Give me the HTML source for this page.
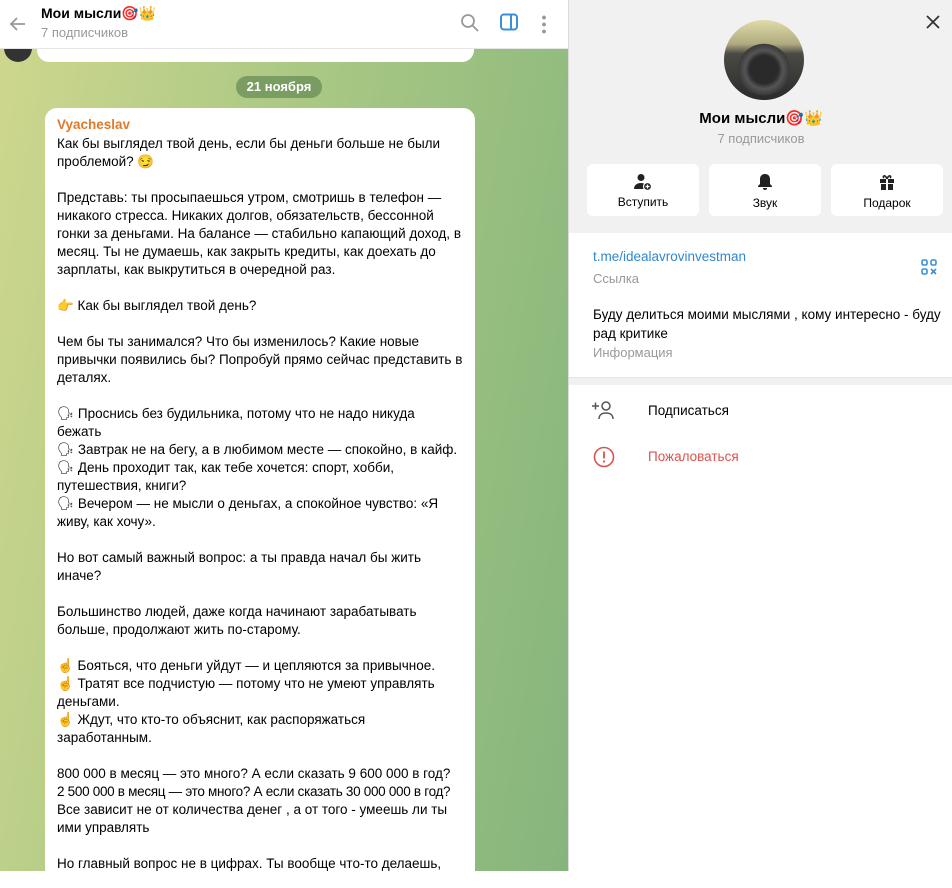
<!DOCTYPE html>
<html><head><meta charset="utf-8"><style>
*{box-sizing:border-box;margin:0;padding:0}
body{width:952px;height:871px;overflow:hidden;font-family:"Liberation Sans","Noto Sans CJK SC",sans-serif;position:relative;background:#fff}
.chat{position:absolute;left:0;top:0;width:568px;height:871px;background:linear-gradient(100deg,#cfd78e 0%,#a9c884 45%,#86b57c 100%)}
.hdr{position:absolute;left:0;top:0;width:568px;height:49px;background:#fff;border-bottom:1px solid #e6e6e6}
.bub{position:absolute;left:45px;top:108px;width:430px;height:780px;background:#fff;border-radius:12px;padding:8px 12px 0 12px;font-size:13.5px;line-height:18px;color:#000}
.right{position:absolute;left:568px;top:0;width:384px;height:871px;background:#fff;border-left:1px solid #dcdcdc}
.btn{position:absolute;top:164px;width:112px;height:52px;background:#fff;border-radius:6px;text-align:center;font-size:12px;color:#000}
</style></head><body>
<div class="chat">
 <div style="position:absolute;left:37px;top:38px;width:437px;height:24px;background:#fff;border-radius:0 0 12px 12px"></div>
 <div style="position:absolute;left:4px;top:38px;width:28px;height:24px;border-radius:0 0 14px 14px;background:#333"></div>
 <div style="position:absolute;left:236px;top:76px;width:86px;height:22px;border-radius:11px;background:rgba(80,120,70,.55);color:#fff;font-size:13px;font-weight:bold;text-align:center;line-height:22px">21 ноября</div>
 <div class="bub">
  <div style="color:#e07a2a;font-weight:bold;margin-bottom:1px">Vyacheslav</div>
  Как бы выглядел твой день, если бы деньги больше не были проблемой? 😏<br><br>
  Представь: ты просыпаешься утром, смотришь в телефон — никакого стресса. Никаких долгов, обязательств, бессонной гонки за деньгами. На балансе — стабильно капающий доход, в месяц. Ты не думаешь, как закрыть кредиты, как доехать до зарплаты, как выкрутиться в очередной раз.<br><br>
  👉 Как бы выглядел твой день?<br><br>
  Чем бы ты занимался? Что бы изменилось? Какие новые привычки появились бы? Попробуй прямо сейчас представить в деталях.<br><br>
  🗣 Проснись без будильника, потому что не надо никуда<br>бежать<br>
  🗣 Завтрак не на бегу, а в любимом месте — спокойно, в кайф.<br>
  🗣 День проходит так, как тебе хочется: спорт, хобби, путешествия, книги?<br>
  🗣 Вечером — не мысли о деньгах, а спокойное чувство: «Я живу, как хочу».<br><br>
  Но вот самый важный вопрос: а ты правда начал бы жить иначе?<br><br>
  Большинство людей, даже когда начинают зарабатывать больше, продолжают жить по-старому.<br><br>
  ☝️ Бояться, что деньги уйдут — и цепляются за привычное.<br>
  ☝️ Тратят все подчистую — потому что не умеют управлять деньгами.<br>
  ☝️ Ждут, что кто-то объяснит, как распоряжаться заработанным.<br><br>
  <span style="white-space:nowrap">800 000  в месяц — это много? А если сказать 9 600 000  в год?</span><br>
  <span style="white-space:nowrap;letter-spacing:-0.3px">2 500 000  в месяц — это много? А если сказать 30 000 000  в год?</span><br>
  Все зависит не от количества денег , а от того - умеешь ли ты ими управлять<br><br>
  Но главный вопрос не в цифрах. Ты вообще что-то делаешь,
 </div>
 <div class="hdr">
  <svg style="position:absolute;left:8px;top:14px" width="20" height="20" viewBox="0 0 20 20"><path d="M17 10H3M9 4L3 10l6 6" fill="none" stroke="#999" stroke-width="1.8"/></svg>
  <div style="position:absolute;left:41px;top:5px;font-size:14px;font-weight:bold">Мои мысли🎯👑</div>
  <div style="position:absolute;left:41px;top:25px;font-size:13px;color:#999">7 подписчиков</div>
  <svg style="position:absolute;left:460px;top:13px" width="20" height="20" viewBox="0 0 20 20"><circle cx="8" cy="8" r="6" fill="none" stroke="#999" stroke-width="1.8"/><path d="M12.5 12.5L18 18" stroke="#999" stroke-width="1.8"/></svg>
  <svg style="position:absolute;left:500px;top:13px" width="18" height="18" viewBox="0 0 18 18"><rect x="1" y="1.5" width="16" height="15" rx="3" fill="none" stroke="#3a8fd9" stroke-width="2"/><rect x="10" y="2" width="2" height="14" fill="#3a8fd9"/></svg>
  <div style="position:absolute;left:542px;top:14px;width:4px;height:20px;background:radial-gradient(circle,#999 1.8px,transparent 2px) 0 0/4px 7px"></div>
 </div>
</div>
<div class="right">
 <div style="position:absolute;left:0;top:0;width:384px;height:233px;background:#f1f1f1"></div>
 <svg style="position:absolute;left:356px;top:14px" width="16" height="16" viewBox="0 0 16 16"><path d="M2 2l12 12M14 2L2 14" stroke="#333" stroke-width="1.8"/></svg>
 <div style="position:absolute;left:155px;top:20px;width:80px;height:80px;border-radius:50%;background:radial-gradient(circle at 50% 62%,#2a2a2a 0 22%,#555 30%,#3a3a3a 40%,transparent 41%),linear-gradient(#e0dca8 0%,#b0aa80 30%,#4a4a44 42%,#2a2a2a 100%)"></div>
 <div style="position:absolute;left:0;width:384px;top:109px;text-align:center;font-size:15px;font-weight:bold">Мои мысли🎯👑</div>
 <div style="position:absolute;left:0;width:384px;top:131px;text-align:center;font-size:13px;color:#999">7 подписчиков</div>
 <div class="btn" style="left:18px"><svg style="margin-top:9px" width="18" height="18" viewBox="0 0 18 18"><circle cx="7" cy="4.5" r="3.5" fill="#222"/><path d="M0 16c0-4 3-6 7-6 2 0 3 .5 4 1v5z" fill="#222"/><circle cx="13.5" cy="13.5" r="4" fill="#222" stroke="#fff" stroke-width="1.2"/><path d="M13.5 11.5v4M11.5 13.5h4" stroke="#fff" stroke-width="1.3"/></svg><div style="margin-top:1px">Вступить</div></div>
 <div class="btn" style="left:140px"><svg style="margin-top:9px" width="16" height="18" viewBox="0 0 16 18"><path d="M8 1c-3 0-5 2-5 5v5l-2 2v1h14v-1l-2-2V6c0-3-2-5-5-5z M6 15h4a2 2 0 0 1-4 0z" fill="#222"/></svg><div style="margin-top:2px">Звук</div></div>
 <div class="btn" style="left:262px"><svg style="margin-top:9px" width="16" height="18" viewBox="0 0 16 18"><path d="M1 6h14v4H1zM2 11h12v6H2z" fill="#222"/><rect x="7" y="5" width="2" height="12" fill="#fff"/><path d="M8 6C6 1 3 3 5 5M8 6c2-5 5-3 3-1" fill="none" stroke="#222" stroke-width="1.6"/></svg><div style="margin-top:2px">Подарок</div></div>
 <div style="position:absolute;left:24px;top:249px;font-size:13.5px;color:#2e87d0">t.me/idealavrovinvestman</div>
 <div style="position:absolute;left:24px;top:271px;font-size:13px;color:#999">Ссылка</div>
 <svg style="position:absolute;left:352px;top:259px" width="16" height="16" viewBox="0 0 16 16" fill="none" stroke="#3a8fd9" stroke-width="1.6"><rect x="1" y="1" width="5" height="5" rx="1.5"/><rect x="10" y="1" width="5" height="5" rx="1.5"/><rect x="1" y="10" width="5" height="5" rx="1.5"/><path d="M10 10l5 5M15 10l-5 5"/></svg>
 <div style="position:absolute;left:24px;top:305px;width:350px;font-size:13.5px;line-height:19px">Буду делиться моими мыслями , кому интересно - буду рад критике</div>
 <div style="position:absolute;left:24px;top:345px;font-size:13px;color:#999">Информация</div>
 <div style="position:absolute;left:0;top:377px;width:384px;height:8px;background:#f1f1f1;border-top:1px solid #e4e4e4"></div>
 <svg style="position:absolute;left:22px;top:400px" width="24" height="20" viewBox="0 0 24 20" fill="none" stroke="#555" stroke-width="1.5"><path d="M1 6h7M4.5 2.5v7"/><circle cx="15" cy="6" r="4"/><path d="M8 19c0-4 3-6 7-6s7 2 7 6"/></svg>
 <div style="position:absolute;left:79px;top:403px;font-size:13.5px">Подписаться</div>
 <svg style="position:absolute;left:24px;top:446px" width="22" height="22" viewBox="0 0 22 22"><circle cx="11" cy="11" r="9.5" fill="none" stroke="#d9534f" stroke-width="1.6"/><path d="M11 5.5v7" stroke="#d9534f" stroke-width="1.8"/><circle cx="11" cy="15.5" r="1.1" fill="#d9534f"/></svg>
 <div style="position:absolute;left:79px;top:449px;font-size:13.5px;color:#d9534f">Пожаловаться</div>
</div>
</body></html>
